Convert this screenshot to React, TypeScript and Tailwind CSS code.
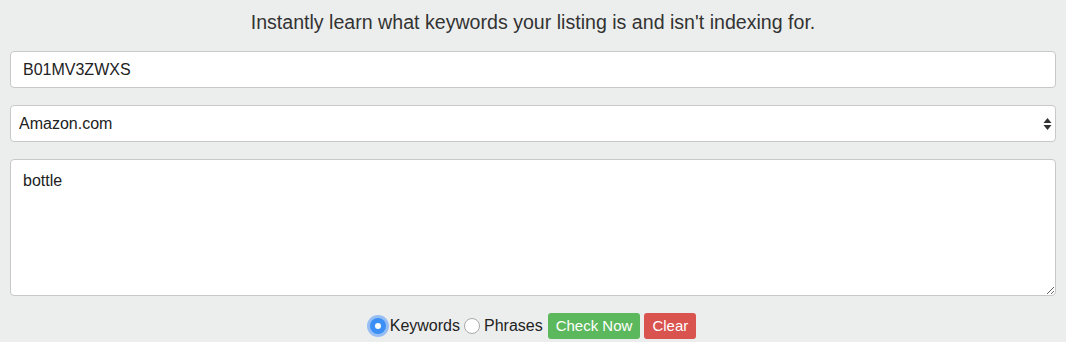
import { useState } from "react";

const font = { fontFamily: '"Liberation Sans", Arial, Helvetica, sans-serif' };

function Radio({ checked, label, onChange }: { checked: boolean; label: string; onChange: () => void }) {
  return (
    <label className="flex cursor-pointer items-center" onClick={onChange}>
      <span
        className={
          checked
            ? "mr-[4px] flex h-[16px] w-[16px] items-center justify-center rounded-full bg-[#3b8ff5] shadow-[0_0_0_3px_rgba(80,150,250,0.55)]"
            : "mr-[4px] h-[16px] w-[16px] rounded-full border border-[#a9a9a9] bg-white"
        }
      >
        {checked && <span className="h-[6px] w-[6px] rounded-full bg-white" />}
      </span>
      <span className="text-[16px] text-[#222]">{label}</span>
    </label>
  );
}

export default function App() {
  const [mode, setMode] = useState<"keywords" | "phrases">("keywords");
  return (
    <div className="h-[342px] w-full overflow-hidden bg-[#eceeed] px-[10px]" style={font}>
      <h1 className="pt-[9px] pb-[15px] text-center text-[19.6px] leading-[27px] text-[#333]">
        Instantly learn what keywords your listing is and isn't indexing for.
      </h1>
      <div className="flex flex-col gap-[17px]">
        <input
          defaultValue="B01MV3ZWXS"
          className="h-[37px] w-full rounded-[4px] border border-[#c8c8c8] bg-white px-[12px] text-[16px] text-[#222] outline-none"
        />
        <div className="relative">
          <select
            defaultValue="com"
            className="h-[37px] w-full appearance-none rounded-[4px] border border-[#c8c8c8] bg-white px-[8px] text-[16px] text-[#222] outline-none"
          >
            <option value="com">Amazon.com</option>
            <option value="uk">Amazon.co.uk</option>
            <option value="de">Amazon.de</option>
          </select>
          <svg
            className="pointer-events-none absolute right-[4px] top-[12px]"
            width="9"
            height="14"
            viewBox="0 0 9 14"
          >
            <path d="M4.5 1 L8.5 6 L0.5 6 Z" fill="#333" />
            <path d="M4.5 13 L8.5 8 L0.5 8 Z" fill="#333" />
          </svg>
        </div>
        <textarea
          defaultValue="bottle"
          className="block h-[137px] w-full rounded-[4px] border border-[#c8c8c8] bg-white px-[12px] py-[10px] text-[16px] leading-[22px] text-[#222] outline-none"
        />
      </div>
      <div className="mt-[17px] flex items-center justify-center gap-[4px]">
        <Radio checked={mode === "keywords"} label="Keywords" onChange={() => setMode("keywords")} />
        <Radio checked={mode === "phrases"} label="Phrases" onChange={() => setMode("phrases")} />
        <button
          type="button"
          className="ml-[1px] h-[26px] rounded-[3px] bg-[#5cb85c] px-[8px] text-[15px] text-white"
        >
          Check Now
        </button>
        <button type="button" className="h-[26px] rounded-[3px] bg-[#d9534f] px-[8px] text-[15px] text-white">
          Clear
        </button>
      </div>
    </div>
  );
}
